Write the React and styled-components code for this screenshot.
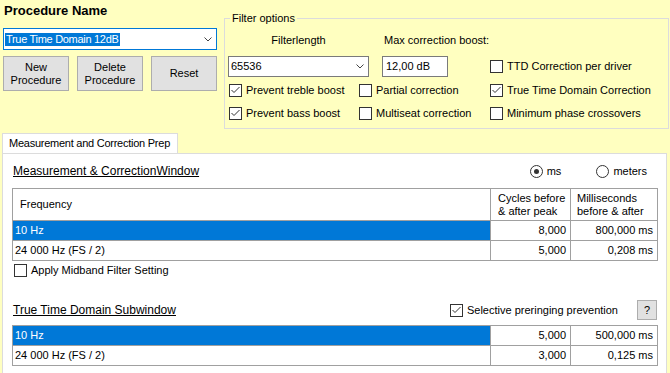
import React from 'react';
import styled, { createGlobalStyle } from 'styled-components';

const GlobalStyle = createGlobalStyle`
  html, body { margin: 0; padding: 0; background: #ffffc0; }
  body { font-family: "Liberation Sans", Arial, sans-serif; font-size: 11px; color: #000; }
`;

const Window = styled.div`
  width: 670px;
  height: 373px;
  overflow: hidden;
  background: #ffffc0;
  display: flex;
  flex-direction: column;
  font-family: "Liberation Sans", Arial, sans-serif;
  font-size: 11px;
  line-height: 13px;
  color: #000;
`;

const TopSection = styled.div`
  flex: none;
  height: 133px;
  display: flex;
  align-items: flex-start;
`;

const ProcedureColumn = styled.div`
  width: 214px;
  margin-left: 3px;
  display: flex;
  flex-direction: column;
`;

const Title = styled.div`
  font-size: 13px;
  font-weight: bold;
  line-height: 16px;
  padding: 3px 0 0 1px;
`;

const Combo = styled.div`
  box-sizing: border-box;
  width: ${p => p.$width}px;
  height: ${p => p.$height}px;
  margin-top: ${p => p.$mt || 0}px;
  border: 1px solid ${p => (p.$focused ? '#0078d7' : '#7a7a7a')};
  background: #fff;
  display: flex;
  align-items: center;
  padding: 0 4px 0 ${p => p.$pl || 1}px;
  flex: none;
`;

const ComboText = styled.span`
  flex: 1;
  white-space: nowrap;
  overflow: hidden;
`;

const SelectedText = styled.span`
  background: #0078d7;
  color: #fff;
  padding: 1px 1px;
  letter-spacing: -0.3px;
`;

const Chevron = () => (
  <svg width="8" height="5" viewBox="0 0 8 5" style={{ flex: 'none' }}>
    <polyline points="0.5,0.5 4,4 7.5,0.5" fill="none" stroke="#444" strokeWidth="1" />
  </svg>
);

const ButtonRow = styled.div`
  margin-top: 6px;
  display: grid;
  grid-template-columns: repeat(3, 66px);
  column-gap: 8px;
`;

const Button = styled.button`
  box-sizing: border-box;
  height: ${p => p.$height || 35}px;
  width: ${p => (p.$width ? `${p.$width}px` : 'auto')};
  border: 1px solid #adadad;
  background: #e1e1e1;
  font-family: "Liberation Sans", Arial, sans-serif;
  font-size: 11px;
  line-height: 13px;
  color: #000;
  padding: 0;
  text-align: center;
  flex: none;
`;

const FilterGroup = styled.fieldset`
  box-sizing: border-box;
  width: 445px;
  min-width: 0;
  margin: 12px 0 0 7px;
  padding: 9px 3px 8px 3px;
  border: 1px solid #dcdcdc;
`;

const Legend = styled.legend`
  padding: 0 2px;
  margin-left: 2px;
  font-size: 11px;
  line-height: 13px;
`;

const LabelRow = styled.div`
  display: flex;
  height: 13px;
`;

const FieldLabel = styled.div`
  width: ${p => (p.$width ? `${p.$width}px` : 'auto')};
  margin-left: ${p => p.$ml || 0}px;
  text-align: ${p => p.$align || 'left'};
  white-space: nowrap;
`;

const InputRow = styled.div`
  margin-top: 9px;
  display: flex;
  align-items: center;
  height: 21px;
`;

const TextBox = styled.div`
  box-sizing: border-box;
  width: 66px;
  height: 21px;
  margin-left: 13px;
  border: 1px solid #7a7a7a;
  background: #fff;
  padding-left: 3px;
  display: flex;
  align-items: center;
`;

const Spacer = styled.div`
  width: ${p => p.$w}px;
  flex: none;
`;

const CheckGrid = styled.div`
  margin-top: 7px;
  padding-left: 1px;
  display: grid;
  grid-template-columns: 130px 131px auto;
  row-gap: 10px;
`;

const CheckRow = styled.label`
  display: inline-flex;
  align-items: center;
  gap: 4px;
  height: 13px;
  line-height: 13px;
  white-space: nowrap;
`;

const Box = styled.span`
  box-sizing: border-box;
  width: 13px;
  height: 13px;
  border: 1px solid #333;
  background: #fff;
  display: flex;
  align-items: center;
  justify-content: center;
  flex: none;
`;

const CheckBox = ({ checked, children }) => (
  <CheckRow>
    <Box>
      {checked && (
        <svg width="11" height="11" viewBox="0 0 11 11">
          <polyline points="1.5,5 4,7.5 9.5,2" fill="none" stroke="#333" strokeWidth="1" />
        </svg>
      )}
    </Box>
    {children}
  </CheckRow>
);

const RadioGroup = styled.div`
  margin-left: auto;
  margin-right: 11px;
  display: flex;
  gap: 35px;
`;

const RadioRow = styled.label`
  display: inline-flex;
  align-items: center;
  gap: 4px;
  white-space: nowrap;
`;

const RadioCircle = styled.span`
  box-sizing: border-box;
  width: 13px;
  height: 13px;
  border-radius: 50%;
  border: 1px solid #333;
  background: #fff;
  display: flex;
  align-items: center;
  justify-content: center;
`;

const RadioDot = styled.span`
  width: 5px;
  height: 5px;
  border-radius: 50%;
  background: #333;
`;

const Radio = ({ checked, children }) => (
  <RadioRow>
    <RadioCircle>{checked && <RadioDot />}</RadioCircle>
    {children}
  </RadioRow>
);

const TabStrip = styled.div`
  flex: none;
  display: flex;
  padding-left: 2px;
  height: 20px;
`;

const Tab = styled.div`
  box-sizing: border-box;
  width: 176px;
  height: 20px;
  margin-bottom: -1px;
  position: relative;
  z-index: 1;
  background: #fff;
  border: 1px solid #dcdcdc;
  border-bottom: none;
  padding-left: 6px;
  display: flex;
  align-items: center;
  letter-spacing: -0.25px;
  white-space: nowrap;
`;

const TabPage = styled.div`
  flex: none;
  box-sizing: border-box;
  height: 240px;
  margin: 0 3px 0 2px;
  border: 1px solid #dcdcdc;
  background: #fff;
  padding: 9px 8px 0 9px;
  display: flex;
  flex-direction: column;
`;

const SectionHeader = styled.div`
  display: flex;
  align-items: center;
  height: ${p => p.$height}px;
  margin-top: ${p => p.$mt || 0}px;
`;

const SectionTitle = styled.div`
  font-size: 12px;
  line-height: 15px;
  text-decoration: underline;
  padding-left: 1px;
  white-space: nowrap;
`;

const Grid = styled.div`
  margin-top: ${p => p.$mt}px;
  display: grid;
  grid-template-columns: 477px 79px 1fr;
  grid-template-rows: ${p => (p.$withHeader ? '31px' : 'none')};
  grid-auto-rows: 19px;
  gap: 1px;
  background: #a0a0a0;
  border: 1px solid #a0a0a0;
`;

const HeaderCell = styled.div`
  background: #fff;
  display: flex;
  align-items: center;
  padding-left: ${p => p.$pl}px;
  white-space: nowrap;
`;

const Cell = styled.div`
  background: ${p => (p.$selected ? '#0078d7' : '#fff')};
  color: ${p => (p.$selected ? '#fff' : '#000')};
  display: flex;
  align-items: center;
  justify-content: ${p => (p.$right ? 'flex-end' : 'flex-start')};
  padding: 0 4px 0 2px;
  white-space: nowrap;
`;

const CheckLine = styled.div`
  margin-top: 3px;
  padding-left: 2px;
  display: flex;
`;

const HelpGroup = styled.div`
  margin-left: auto;
  margin-right: 1px;
  display: flex;
  align-items: center;
  gap: 19px;
`;

const rows1 = [
  { f: '10 Hz', c: '8,000', m: '800,000 ms', sel: true },
  { f: '24 000 Hz (FS / 2)', c: '5,000', m: '0,208 ms' },
];
const rows2 = [
  { f: '10 Hz', c: '5,000', m: '500,000 ms', sel: true },
  { f: '24 000 Hz (FS / 2)', c: '3,000', m: '0,125 ms' },
];

const DataRows = ({ rows }) =>
  rows.map(r => (
    <React.Fragment key={r.f}>
      <Cell $selected={r.sel}>{r.f}</Cell>
      <Cell $right>{r.c}</Cell>
      <Cell $right>{r.m}</Cell>
    </React.Fragment>
  ));

export default function App() {
  return (
    <>
      <GlobalStyle />
      <Window>
        <TopSection>
          <ProcedureColumn>
            <Title>Procedure Name</Title>
            <Combo $focused $width={214} $height={22} $mt={9} $pl={1}>
              <ComboText>
                <SelectedText>True Time Domain 12dB</SelectedText>
              </ComboText>
              <Chevron />
            </Combo>
            <ButtonRow>
              <Button>New<br />Procedure</Button>
              <Button>Delete<br />Procedure</Button>
              <Button>Reset</Button>
            </ButtonRow>
          </ProcedureColumn>
          <FilterGroup>
            <Legend>Filter options</Legend>
            <LabelRow>
              <FieldLabel $width={141} $align="center">Filterlength</FieldLabel>
              <FieldLabel $ml={15}>Max correction boost:</FieldLabel>
            </LabelRow>
            <InputRow>
              <Combo $width={141} $height={21} $pl={2}>
                <ComboText>65536</ComboText>
                <Chevron />
              </Combo>
              <TextBox>12,00 dB</TextBox>
              <Spacer $w={42} />
              <CheckBox>TTD Correction per driver</CheckBox>
            </InputRow>
            <CheckGrid>
              <CheckBox checked>Prevent treble boost</CheckBox>
              <CheckBox>Partial correction</CheckBox>
              <CheckBox checked>True Time Domain Correction</CheckBox>
              <CheckBox checked>Prevent bass boost</CheckBox>
              <CheckBox>Multiseat correction</CheckBox>
              <CheckBox>Minimum phase crossovers</CheckBox>
            </CheckGrid>
          </FilterGroup>
        </TopSection>
        <TabStrip>
          <Tab>Measurement and Correction Prep</Tab>
        </TabStrip>
        <TabPage>
          <SectionHeader $height={17}>
            <SectionTitle>Measurement &amp; CorrectionWindow</SectionTitle>
            <RadioGroup>
              <Radio checked>ms</Radio>
              <Radio>meters</Radio>
            </RadioGroup>
          </SectionHeader>
          <Grid $mt={8} $withHeader>
            <HeaderCell $pl={7}>Frequency</HeaderCell>
            <HeaderCell $pl={7}>Cycles before<br />&amp; after peak</HeaderCell>
            <HeaderCell $pl={6}>Milliseconds<br />before &amp; after</HeaderCell>
            <DataRows rows={rows1} />
          </Grid>
          <CheckLine>
            <CheckBox>Apply Midband Filter Setting</CheckBox>
          </CheckLine>
          <SectionHeader $height={20} $mt={23}>
            <SectionTitle>True Time Domain Subwindow</SectionTitle>
            <HelpGroup>
              <CheckBox checked>Selective preringing prevention</CheckBox>
              <Button $width={20} $height={20}>?</Button>
            </HelpGroup>
          </SectionHeader>
          <Grid $mt={5}>
            <DataRows rows={rows2} />
          </Grid>
        </TabPage>
      </Window>
    </>
  );
}
